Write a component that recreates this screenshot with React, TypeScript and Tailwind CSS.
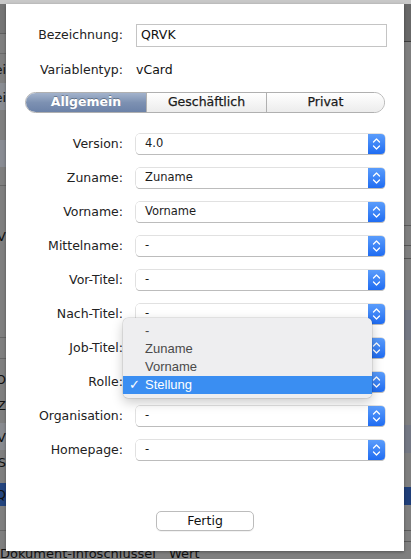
import React from 'react'

const fields = [
  { label: 'Version', value: '4.0' },
  { label: 'Zuname', value: 'Zuname' },
  { label: 'Vorname', value: 'Vorname' },
  { label: 'Mittelname', value: '-' },
  { label: 'Vor-Titel', value: '-' },
  { label: 'Nach-Titel', value: '-' },
  { label: 'Job-Titel', value: '-' },
  { label: 'Rolle', value: 'Stellung' },
  { label: 'Organisation', value: '-' },
  { label: 'Homepage', value: '-' },
]

function Stepper() {
  return (
    <div className="flex h-full w-[17px] shrink-0 items-center justify-center rounded-r-[4px] bg-gradient-to-b from-[#5a9cfb] to-[#1f6cf2]">
      <svg width="9" height="14" viewBox="0 0 9 14" fill="none">
        <path d="M1.5 5 L4.5 2 L7.5 5" stroke="white" strokeWidth="1.3" strokeLinecap="round" strokeLinejoin="round" />
        <path d="M1.5 9 L4.5 12 L7.5 9" stroke="white" strokeWidth="1.3" strokeLinecap="round" strokeLinejoin="round" />
      </svg>
    </div>
  )
}

function Select({ value }: { value: string }) {
  return (
    <div className="flex h-[20px] w-[249px] items-stretch rounded-[4px] shadow-[0_0_0_0.5px_#c4c4c4,0_1px_0_0_#b4b4b4]">
      <div className="flex flex-1 items-center rounded-l-[4px] bg-white pl-[9px] text-[11.5px] text-[#1c1c1c]">
        {value}
      </div>
      <Stepper />
    </div>
  )
}

function Label({ children }: { children: React.ReactNode }) {
  return <div className="w-[118px] shrink-0 pr-[1px] text-right text-[12.5px] text-[#222]">{children}</div>
}

// strips of the blurred window behind the sheet
const leftBands = [
  { top: 4, h: 29, c: 'bg-[#757575]' },
  { top: 33, h: 1, c: 'bg-[#5f5f5f]' },
  { top: 53, h: 1, c: 'bg-[#6a6a6a]' },
  { top: 83, h: 27, c: 'bg-[#8a8d93]' },
  { top: 140, h: 27, c: 'bg-[#898c93]' },
  { top: 185, h: 1, c: 'bg-[#666]' },
  { top: 337, h: 1, c: 'bg-[#666]' },
  { top: 358, h: 1, c: 'bg-[#666]' },
  { top: 423, h: 27, c: 'bg-[#898b90]' },
  { top: 483, h: 23, c: 'bg-[#24457f]' },
  { top: 530, h: 1, c: 'bg-[#666]' },
]

const rightBands = [
  { top: 4, h: 37, c: 'bg-[#686868]' },
  { top: 41, h: 1, c: 'bg-[#3c3c3c]' },
  { top: 225, h: 1, c: 'bg-[#5a5a5a]' },
  { top: 245, h: 1, c: 'bg-[#555]' },
  { top: 258, h: 1, c: 'bg-[#555]' },
  { top: 310, h: 30, c: 'bg-[#747884]' },
  { top: 425, h: 28, c: 'bg-[#747884]' },
  { top: 487, h: 18, c: 'bg-[#1f3e78]' },
  { top: 530, h: 1, c: 'bg-[#5a5a5a]' },
  { top: 541, h: 1, c: 'bg-[#5a5a5a]' },
]

const leftLetters = [
  { top: 62, t: 'Bei' },
  { top: 90, t: 'Bei' },
  { top: 229, t: 'V' },
  { top: 372, t: 'O' },
  { top: 398, t: 'Z' },
  { top: 430, t: 'V' },
  { top: 455, t: 'S' },
  { top: 487, t: 'Q' },
]

export default function App() {
  return (
    <div className="relative h-[559px] w-[411px] overflow-hidden bg-[#7f7f7f] font-['DejaVu_Sans',sans-serif]">
      <div className="absolute inset-x-0 top-0 h-[4px] bg-[#c8c8c8]" />
      {leftBands.map((b) => (
        <div key={b.top} className={`absolute left-0 w-[6px] ${b.c}`} style={{ top: b.top, height: b.h }} />
      ))}
      {rightBands.map((b) => (
        <div key={b.top} className={`absolute right-0 w-[7px] ${b.c}`} style={{ top: b.top, height: b.h }} />
      ))}
      {leftLetters.map((l) => (
        <div
          key={l.top}
          className="absolute right-[405px] whitespace-nowrap text-[13px] leading-[16px] text-[#111]"
          style={{ top: l.top }}
        >
          {l.t}
        </div>
      ))}
      <div className="absolute left-0 top-[544px] whitespace-nowrap text-[13px] text-[#111]">
        Dokument-Infoschlüssel
      </div>
      <div className="absolute left-[169px] top-[544px] whitespace-nowrap text-[13px] text-[#111]">Wert</div>

      {/* sheet */}
      <div className="absolute left-[6px] top-[4px] flex h-[547px] w-[398px] flex-col bg-white shadow-[0_1px_3px_rgba(0,0,0,0.35)]">
        <div className="mt-[20px] flex items-center gap-[12px]">
          <Label>Bezeichnung:</Label>
          <div className="flex h-[23px] w-[251px] items-center border border-[#c4c4c4] pl-[4px] text-[12.5px] text-[#111]">
            QRVK
          </div>
        </div>
        <div className="mt-[13px] flex h-[20px] items-center gap-[12px]">
          <Label>Variablentyp:</Label>
          <span className="text-[12.5px] text-[#111]">vCard</span>
        </div>

        <div className="ml-[19px] mt-[12px] flex h-[21px] w-[360px] overflow-hidden rounded-full border border-[#b0b0b0] text-[12.5px]">
          <div className="flex w-[120px] items-center justify-center bg-gradient-to-b from-[#a3b3cc] via-[#7d91b2] to-[#6c82a8] font-bold text-white [text-shadow:0_-1px_0_rgba(0,0,0,0.3)]">
            Allgemein
          </div>
          <div className="flex w-[120px] items-center justify-center border-l border-[#b0b0b0] bg-gradient-to-b from-white to-[#ececec] text-[#1a1a1a] [-webkit-text-stroke:0.25px_#1a1a1a]">
            Geschäftlich
          </div>
          <div className="flex flex-1 items-center justify-center border-l border-[#b0b0b0] bg-gradient-to-b from-white to-[#ececec] text-[#1a1a1a] [-webkit-text-stroke:0.25px_#1a1a1a]">
            Privat
          </div>
        </div>

        <div className="mt-[21px] flex flex-col gap-[14px]">
          {fields.map((f) => (
            <div key={f.label} className="flex h-[20px] items-center gap-[12px]">
              <Label>{f.label}:</Label>
              <Select value={f.value} />
            </div>
          ))}
        </div>

        <div className="mb-[20px] mt-auto flex justify-center">
          <button className="h-[20px] w-[98px] rounded-[5px] border border-[#bcbcbc] bg-white text-[12.5px] text-[#111] shadow-[0_1px_0_rgba(0,0,0,0.05)]">
            Fertig
          </button>
        </div>

        {/* open popup menu of "Rolle" */}
        <div className="absolute left-[117px] top-[314px] w-[249px] rounded-[5px] bg-[#eeeef0] py-[4px] font-['Liberation_Sans',sans-serif] text-[13px] text-[#4a4a4a] shadow-[0_4px_12px_rgba(0,0,0,0.22),0_0_0_0.5px_rgba(0,0,0,0.15)]">
          {['-', 'Zuname', 'Vorname'].map((item) => (
            <div key={item} className="flex h-[18px] items-center pl-[22px]">
              {item}
            </div>
          ))}
          <div className="flex h-[18px] items-center bg-[#3a8ef2] text-white">
            <span className="w-[22px] pl-[6px] font-['DejaVu_Sans',sans-serif] text-[13px]">✓</span>
            <span>Stellung</span>
          </div>
        </div>
      </div>
    </div>
  )
}
